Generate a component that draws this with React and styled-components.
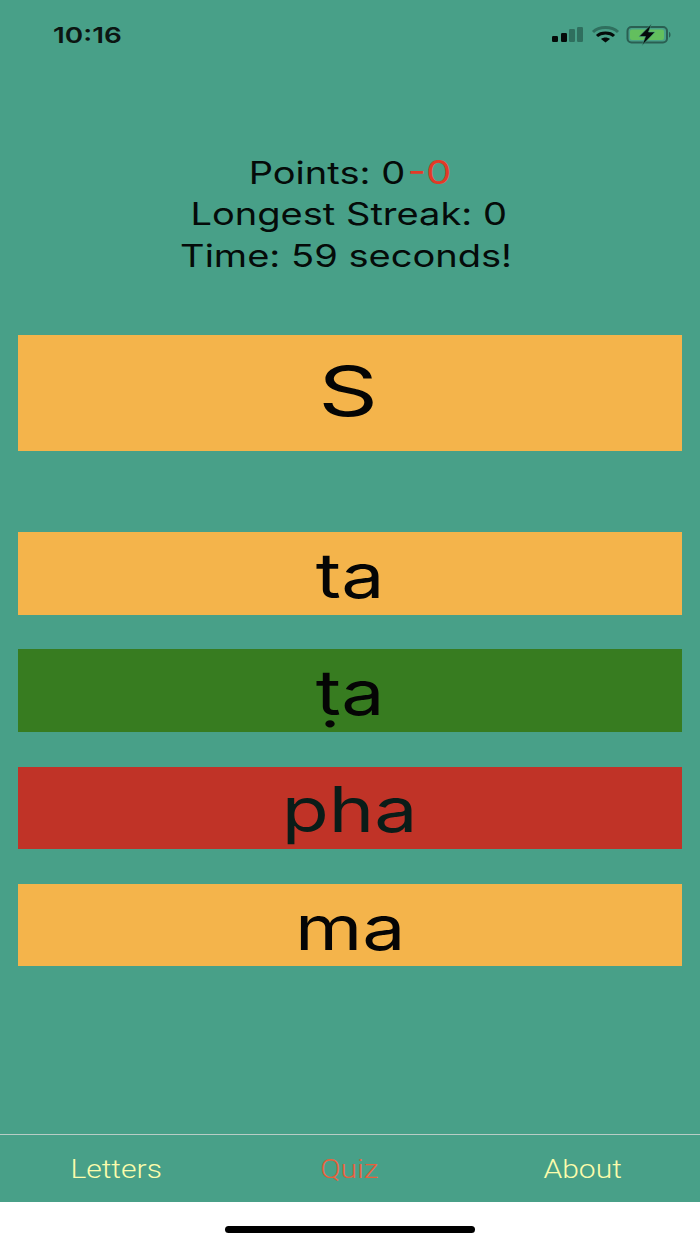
import React from "react";
import styled, { createGlobalStyle } from "styled-components";

const Global = createGlobalStyle`
  html, body { margin: 0; padding: 0; background: #fff; }
  body { font-family: Inter, "Liberation Sans", sans-serif; }
`;

const Screen = styled.div`
  width: 700px;
  height: 1244px;
  display: flex;
  flex-direction: column;
  overflow: hidden;
  background: #fff;
`;

const Green = styled.div`
  height: 1202px;
  background: #48a088;
  display: flex;
  flex-direction: column;
`;

const StatusBar = styled.div`
  height: 68px;
  box-sizing: border-box;
  padding: 0 29px 0 53px;
  display: flex;
  align-items: center;
  justify-content: space-between;
`;

const Wide = styled.span`
  display: inline-block;
  white-space: nowrap;
  transform: scaleX(${(p) => p.$x || 1.22});
  transform-origin: ${(p) => p.$origin || "center"};
`;

const Clock = styled.div`
  font-size: 22px;
  font-weight: 600;
  color: #0c1512;
  line-height: 26px;
  padding-top: 2px;
`;

const StatusIcons = styled.div`
  display: flex;
  align-items: center;
`;

const Main = styled.main`
  flex: 1;
  display: flex;
  flex-direction: column;
  padding: 84.6px 18px 0;
`;

const Stats = styled.div`
  text-align: center;
  font-size: 31.2px;
  line-height: 41.5px;
  color: #050b09;
  height: 124.4px;
  margin-bottom: 58px;
  padding-right: 8px;
`;

const StatLine = styled.div`
  height: 41.5px;
  padding-left: ${(p) => p.$indent || 0}px;
`;

const Miss = styled.span`
  color: #e23a27;
  font-size: 33px;
  line-height: 0;
  margin-left: 2px;
`;

const Card = styled.div`
  background: ${(p) => p.$bg || "#f4b44b"};
  height: ${(p) => p.$h}px;
  box-sizing: border-box;
  padding-top: ${(p) => p.$drop || 0}px;
  display: flex;
  align-items: center;
  justify-content: center;
  color: ${(p) => p.$fg || "#050505"};
  font-size: ${(p) => p.$size}px;
  line-height: 1;
`;

const Prompt = styled(Card)`
  margin-bottom: 81.2px;
  padding: 0 3px 3px 0;
`;

const Options = styled.div`
  display: flex;
  flex-direction: column;
  gap: 34.6px;
`;

const TabBar = styled.nav`
  height: 68px;
  box-sizing: border-box;
  border-top: 1px solid #b8cdc6;
  display: grid;
  grid-template-columns: repeat(3, 1fr);
  align-items: center;
`;

const Tab = styled.div`
  text-align: center;
  font-family: Roboto, "Liberation Sans", sans-serif;
  font-weight: 300;
  font-size: 25px;
  padding: 2px 1px 0 0;
  color: ${(p) => (p.$active ? "#e8603c" : "#fcfcac")};
`;

const HomeArea = styled.div`
  flex: 1;
  display: flex;
  justify-content: center;
  padding-top: 24px;
`;

const HomeBar = styled.div`
  width: 250px;
  height: 7px;
  border-radius: 4px;
  background: #000;
`;

const StatusGlyphs = () => (
  <svg width="120" height="24" viewBox="0 0 120 24">
    <rect x="1" y="14" width="6" height="6" rx="1.2" fill="#050b09" />
    <rect x="10" y="11" width="6" height="9" rx="1.2" fill="#050b09" />
    <rect x="18" y="7" width="6" height="13" rx="1.2" fill="#2f6f5e" />
    <rect x="26" y="5" width="6" height="15" rx="1.2" fill="#2f6f5e" />
    <path d="M42 10 C48 4 61 4 67 10" fill="none" stroke="#2f6f5e" strokeWidth="3" />
    <path d="M46 14 C50 10 59 10 63 14" fill="none" stroke="#050b09" strokeWidth="3" />
    <path d="M50 17 C52.5 15 56.5 15 59 17 L54.5 20.5 Z" fill="#050b09" />
    <rect x="76.5" y="5" width="39.5" height="15.5" rx="4" fill="none" stroke="#2a5f52" strokeWidth="2" />
    <rect x="79" y="7.5" width="34" height="10.5" rx="2" fill="#63bf5e" />
    <path d="M118 10 C120 10.5 120 15 118 15.5 Z" fill="#2a5f52" />
    <path d="M100.5 2 L88 14.5 L94.5 14.5 L91 23.5 L104 10 L97.5 10 Z" fill="#050b09" stroke="#48a088" strokeWidth="0.6" />
  </svg>
);

const options = [
  { text: "ta" },
  { text: "ṭa", bg: "#377c20" },
  { text: "pha", bg: "#c03327", fg: "#0a1c18" },
  { text: "ma" },
];

export default function App() {
  return (
    <Screen>
      <Global />
      <Green>
        <StatusBar>
          <Clock>
            <Wide $origin="left" $x={1.27}>10:16</Wide>
          </Clock>
          <StatusIcons>
            <StatusGlyphs />
          </StatusIcons>
        </StatusBar>
        <Main>
          <Stats>
            <StatLine $indent={8}>
              <Wide>
                Points: 0<Miss>-0</Miss>
              </Wide>
            </StatLine>
            <StatLine $indent={6}>
              <Wide>Longest Streak: 0</Wide>
            </StatLine>
            <StatLine>
              <Wide>Time: 59 seconds!</Wide>
            </StatLine>
          </Stats>
          <Prompt $h={116} $size={69}>
            <Wide $x={1.35}>S</Wide>
          </Prompt>
          <Options>
            {options.map((o) => (
              <Card key={o.text} $h={82.6} $size={63} $drop={4} $bg={o.bg} $fg={o.fg}>
                <Wide>{o.text}</Wide>
              </Card>
            ))}
          </Options>
        </Main>
        <TabBar>
          <Tab>
            <Wide $x={1.2}>Letters</Wide>
          </Tab>
          <Tab $active>
            <Wide $x={1.2}>Quiz</Wide>
          </Tab>
          <Tab>
            <Wide $x={1.2}>About</Wide>
          </Tab>
        </TabBar>
      </Green>
      <HomeArea>
        <HomeBar />
      </HomeArea>
    </Screen>
  );
}
